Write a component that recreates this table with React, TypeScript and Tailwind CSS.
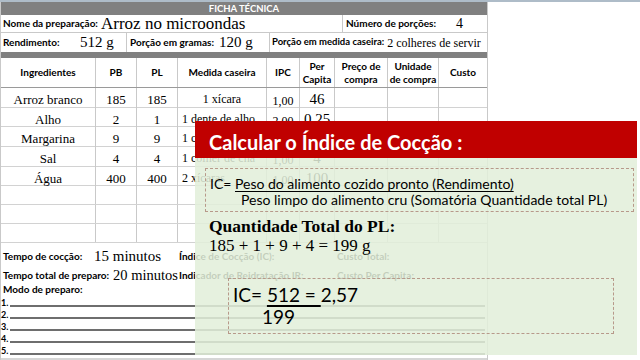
import React from "react"

const serif = "[font-family:'Liberation_Serif',serif]"
const cell = "border-r border-[#c9c9c9] flex items-center justify-center"

const cols = "grid grid-cols-[95px_41px_41px_89px_33px_35px_53px_51px_48px]"

const rows = [
  { n: "Arroz branco", pb: "185", pl: "185", m: "1 xícara", ipc: "1,00", pc: "46", h: "h-[20px]", center: true },
  { n: "Alho", pb: "2", pl: "1", m: "1 dente de alho", ipc: "2,00", pc: "0,25", h: "h-[19px]" },
  { n: "Margarina", pb: "9", pl: "9", m: "1 colher de chá", ipc: "1,00", pc: "9", h: "h-[20px]" },
  { n: "Sal", pb: "4", pl: "4", m: "1 colher de chá", ipc: "1,00", pc: "4", h: "h-[20px]" },
  { n: "Água", pb: "400", pl: "400", m: "2 xícaras", ipc: "1,00", pc: "100", h: "h-[19px]" },
  { n: "", pb: "", pl: "", m: "", ipc: "", pc: "", h: "h-[19px]" },
  { n: "", pb: "", pl: "", m: "", ipc: "", pc: "", h: "h-[19px]" },
  { n: "", pb: "", pl: "", m: "", ipc: "", pc: "", h: "h-[19px]" },
]

const headers = ["Ingredientes", "PB", "PL", "Medida caseira", "IPC", "Per Capita", "Preço de compra", "Unidade de compra", "Custo"]

export default function App() {
  return (
    <div className="relative w-[640px] h-[360px] overflow-hidden bg-white text-black [font-family:Lato,sans-serif]">
      <div className="h-[2px] bg-[#aebcc8]" />
      <div className="w-[488px] border-l border-r border-[#c9c9c9]">
        <div className="h-[13px] bg-[#808080] flex items-center justify-center text-white font-bold text-[9.5px] leading-none">
          FICHA TÉCNICA
        </div>

        <div className="h-[18px] flex border-b border-[#c9c9c9]">
          <div className="w-[342px] border-r border-[#c9c9c9] flex items-center pl-[2px]">
            <span className="font-bold text-[10px] w-[98px]">Nome da preparação:</span>
            <span className={`${serif} text-[17px] leading-none`}>Arroz no microondas</span>
          </div>
          <div className="flex items-center pl-[3px]">
            <span className="font-bold text-[10px] w-[110px]">Número de porções:</span>
            <span className={`${serif} text-[14px] leading-none`}>4</span>
          </div>
        </div>

        <div className="h-[19px] flex">
          <div className="w-[126px] border-r border-[#c9c9c9] flex items-center pl-[2px]">
            <span className="font-bold text-[10px] w-[77px]">Rendimento:</span>
            <span className={`${serif} text-[15px] leading-none`}>512 g</span>
          </div>
          <div className="w-[143px] border-r border-[#c9c9c9] flex items-center pl-[3px]">
            <span className="font-bold text-[10px] w-[89px]">Porção em gramas:</span>
            <span className={`${serif} text-[15px] leading-none`}>120 g</span>
          </div>
          <div className="flex items-center pl-[2px] whitespace-nowrap">
            <span className="font-bold text-[9.5px]">Porção em medida caseira:</span>
            <span className={`${serif} text-[12px] leading-none ml-[3px]`}>2 colheres de servir</span>
          </div>
        </div>

        <div className="h-[6px] bg-[#808080]" />

        <div className={`${cols} h-[30px] border-b border-[#9a9a9a]`}>
          {headers.map((h, i) => (
            <div key={i} className={`${i < 8 ? cell : "flex items-center justify-center"} font-bold text-[10px] leading-[13px] text-center px-[1px]`}>
              {h}
            </div>
          ))}
        </div>

        {rows.map((r, i) => (
          <div key={i} className={`${cols} ${r.h} border-b border-[#d2d2d2] ${serif}`}>
            <div className={`${cell} text-[13px]`}>{r.n}</div>
            <div className={`${cell} text-[13px]`}>{r.pb}</div>
            <div className={`${cell} text-[13px]`}>{r.pl}</div>
            <div className={`border-r border-[#c9c9c9] flex items-center text-[12px] whitespace-nowrap ${r.center ? "justify-center" : "pl-[4px]"}`}>
              {r.m}
            </div>
            <div className={`${cell} text-[12px] pt-[3px]`}>{r.ipc}</div>
            <div className={`${cell} text-[15px]`}>{r.pc}</div>
            <div className="border-r border-[#c9c9c9]" />
            <div className="border-r border-[#c9c9c9]" />
            <div />
          </div>
        ))}

        <div className="h-[23px] flex items-center pt-[4px] whitespace-nowrap">
          <div className="w-[178px] flex items-center pl-[2px]">
            <span className="font-bold text-[10px] w-[91px]">Tempo de cocção:</span>
            <span className={`${serif} text-[15px] leading-none`}>15 minutos</span>
          </div>
          <div className="w-[158px] font-bold text-[10px]">Índice de Cocção (IC):</div>
          <div className="font-bold text-[10px]">Custo Total:</div>
        </div>

        <div className="h-[18px] flex items-center whitespace-nowrap">
          <div className="w-[178px] flex items-center pl-[2px]">
            <span className="font-bold text-[10px] w-[110px]">Tempo total de preparo:</span>
            <span className={`${serif} text-[14.5px] leading-none`}>20 minutos</span>
          </div>
          <div className="w-[158px] font-bold text-[10px]">Indicador de Reidratação IR:</div>
          <div className="font-bold text-[10px]">Custo Per Capita:</div>
        </div>

        <div className="h-[11px] pl-[2px] font-bold text-[10px] leading-[11px]">Modo de preparo:</div>

        {["1.", "2.", "3.", "4.", "5."].map((n) => (
          <div key={n} className="h-[12px] flex items-end pr-[2px]">
            <span className="font-bold text-[9px] leading-[9px] w-[9px]">{n}</span>
            <span className="flex-1 border-b-2 border-[#6e6e6e]" />
          </div>
        ))}

        <div className="h-[3px]" />
        <div className="h-[3px] bg-[#d6d6d6]" />
      </div>

      <div className="absolute left-[195px] top-[121px] w-[442px]">
        <div className="h-[37px] bg-[#c00000] flex items-center pl-[14px] pt-[4px] text-white font-bold text-[20px]">
          Calcular o Índice de Cocção :
        </div>
        <div className="h-[197px] bg-[#e2efda]/[0.86] pt-[10px] px-[10px]">
          <div className="w-[429px] h-[44px] border border-dashed border-[#b7998a] pl-[4px] pt-[7px] text-[14px] leading-[16px]">
            <div>
              IC= <span className="underline underline-offset-[2px]">Peso do alimento cozido pronto (Rendimento)</span>
            </div>
            <div className="pl-[31px]">Peso limpo do alimento cru (Somatória Quantidade total PL)</div>
          </div>
          <div className={`${serif} pl-[4px] mt-[5px] font-bold text-[17.5px] leading-[19px]`}>Quantidade Total do PL:</div>
          <div className={`${serif} pl-[4px] text-[17px] leading-[19px]`}>185 + 1 + 9 + 4 = 199 g</div>
          <div className="ml-[23px] mt-[23px] w-[386px] h-[56px] border border-dashed border-[#b7998a] pl-[4px] pt-[5px] text-[19px] leading-[22px]">
            <div>
              IC= <span className="underline decoration-2 underline-offset-[3px]">512 = </span>2,57
            </div>
            <div className="pl-[29px]">199</div>
          </div>
        </div>
      </div>
    </div>
  )
}
